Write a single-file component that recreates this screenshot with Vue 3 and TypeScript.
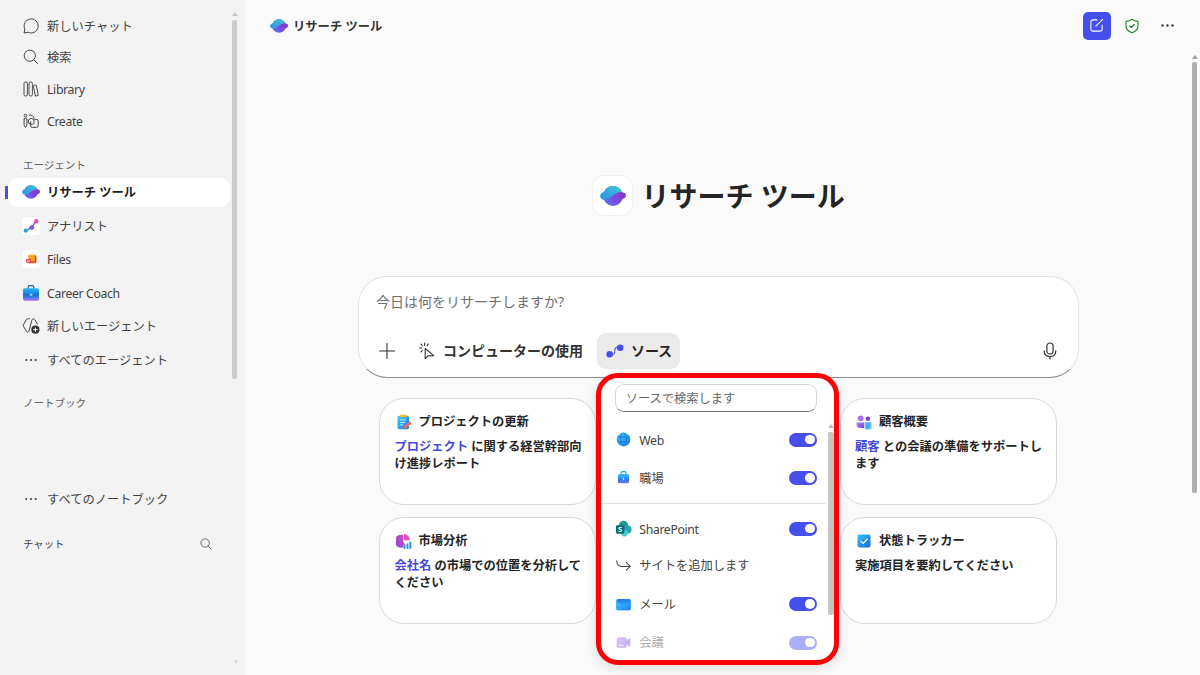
<script setup lang="ts">
interface NavItem { icon: string; label: string; latin?: boolean; active?: boolean }
interface Card { icon: string; title: string; accent?: string; body: string; side: 'left' | 'right' }
interface Source { icon: string; label: string; latin?: boolean; toggle: boolean; kind: string }

const nav: NavItem[] = [
  { icon: 'chat', label: '新しいチャット' },
  { icon: 'search', label: '検索' },
  { icon: 'library', label: 'Library', latin: true },
  { icon: 'create', label: 'Create', latin: true },
]
const agents: NavItem[] = [
  { icon: 'planet', label: 'リサーチ ツール', active: true },
  { icon: 'analyst', label: 'アナリスト' },
  { icon: 'files', label: 'Files', latin: true },
  { icon: 'career', label: 'Career Coach', latin: true },
  { icon: 'newagent', label: '新しいエージェント' },
  { icon: 'dots', label: 'すべてのエージェント' },
]
const cards: Card[] = [
  { icon: 'note', title: 'プロジェクトの更新', accent: 'プロジェクト', body: ' に関する経営幹部向け進捗レポート', side: 'left' },
  { icon: 'people', title: '顧客概要', accent: '顧客', body: ' との会議の準備をサポートします', side: 'right' },
  { icon: 'pie', title: '市場分析', accent: '会社名', body: ' の市場での位置を分析してください', side: 'left' },
  { icon: 'check', title: '状態トラッカー', body: '実施項目を要約してください', side: 'right' },
]
const sources: Source[] = [
  { icon: 'globe', label: 'Web', latin: true, toggle: true, kind: 'web' },
  { icon: 'case', label: '職場', toggle: true, kind: 'work' },
  { icon: 'sharepoint', label: 'SharePoint', latin: true, toggle: true, kind: 'sp' },
  { icon: 'sub', label: 'サイトを追加します', toggle: false, kind: 'site' },
  { icon: 'mail', label: 'メール', toggle: true, kind: 'mail' },
  { icon: 'video', label: '会議', toggle: true, kind: 'meeting' },
]
</script>

<template>
  <div class="app">
    <svg class="defs" width="0" height="0" aria-hidden="true">
      <defs>
        <linearGradient id="gTop" x1="0" y1="1" x2="1" y2="0"><stop offset="0" stop-color="#2f8fea" /><stop offset=".5" stop-color="#38a8e0" /><stop offset="1" stop-color="#38cfc8" /></linearGradient>
        <linearGradient id="gBot" x1="0" y1="1" x2="1" y2="0"><stop offset="0" stop-color="#5b7cf5" /><stop offset=".5" stop-color="#7a48e0" /><stop offset="1" stop-color="#9a35c4" /></linearGradient>
        <linearGradient id="gBlue" x1="0" y1="0" x2="1" y2="1"><stop offset="0" stop-color="#35c3f3" /><stop offset="1" stop-color="#1468dc" /></linearGradient>
        <linearGradient id="gMail" x1="0" y1="0" x2="1" y2="1"><stop offset="0" stop-color="#3cc8ff" /><stop offset="1" stop-color="#1e7cf0" /></linearGradient>
        <linearGradient id="gEnv" x1="0" y1="0" x2="0" y2="1"><stop offset="0" stop-color="#1e7de0" /><stop offset="1" stop-color="#38bdfc" /></linearGradient>
        <linearGradient id="gWork" x1="0" y1="0" x2="0" y2="1"><stop offset="0" stop-color="#35c0f8" /><stop offset=".6" stop-color="#2b7cf0" /><stop offset="1" stop-color="#7f74f2" /></linearGradient>
        <linearGradient id="gCase" x1="0" y1="0" x2="0" y2="1"><stop offset="0" stop-color="#28b4f5" /><stop offset=".6" stop-color="#1c74dc" /><stop offset=".8" stop-color="#5b7cf0" /><stop offset="1" stop-color="#b06cf0" /></linearGradient>
        <linearGradient id="gLine" x1="0" y1="1" x2="1" y2="0"><stop offset="0" stop-color="#22a7dc" /><stop offset=".5" stop-color="#7656dc" /><stop offset="1" stop-color="#ee55b0" /></linearGradient>
        <linearGradient id="gPink" x1="0" y1="1" x2="1" y2="0"><stop offset="0" stop-color="#8b45d8" /><stop offset="1" stop-color="#d44fc4" /></linearGradient>
        <linearGradient id="gPurple" x1="0" y1="0" x2="1" y2="1"><stop offset="0" stop-color="#b87cf5" /><stop offset="1" stop-color="#7548d8" /></linearGradient>
        <symbol id="chat" viewBox="0 0 16 16"><path d="M1 15l.9-3.900A7 7 0 1 1 5 14.200z" fill="none" stroke="currentColor" stroke-linejoin="round" /></symbol>
        <symbol id="search" viewBox="0 0 16 16"><circle cx="6.800" cy="6.700" r="5.600" fill="none" stroke="currentColor" /><path d="M10.900 10.800l3.700 3.800" fill="none" stroke="currentColor" stroke-linecap="round" /></symbol>
        <symbol id="library" viewBox="0 0 16 16"><g fill="none" stroke="currentColor" stroke-width=".95"><rect x="1" y="1" width="3.400" height="14" rx="1.500" /><rect x="6" y="1" width="3.400" height="14" rx="1.500" /><rect x="11.300" y="4" width="3" height="11" rx="1.400" transform="rotate(-11 12.700 9.500)" /></g></symbol>
        <symbol id="create" viewBox="0 0 16 16"><g fill="none" stroke="currentColor" stroke-linejoin="round"><circle cx="2.500" cy="2.600" r="1.300" /><path d="M1.100 5.600q1.400-1 2.800 0v6.700l-1.400 2.200-1.400-2.200z" /><path d="M5.800 2.100q4.400-.6 5.300 3.400" /><path d="M7.600 11.200a2.900 2.900 0 1 1 3.500-2.900v1.200q0 1.700-1.600 1.700z" /><path d="M11.300 6.400h2.200q1.700 0 1.700 1.700v4.600q0 1.700-1.700 1.700H9.300q-1.700 0-1.700-1.700V8.300" /></g></symbol>
        <symbol id="planet" viewBox="0 0 26 20"><circle cx="13" cy="10" r="9.900" fill="url(#gBot)" /><path d="M20 6.200C23.500 6 26 7 26 9.500 25.800 12 23.500 13.300 20 13.300z" fill="#8437cc" /><path d="M3.900 6A9.900 9.900 0 0 1 22 6C17.500 6 14 8.500 11 11 8 13.500 5 14 2.500 13.400-.8 12.500-.8 6.800 3.900 6z" fill="url(#gTop)" /></symbol>
        <symbol id="analyst" viewBox="0 0 18 18"><rect width="18" height="18" rx="4" fill="#fff" /><path d="M4 13.700l5.800-3.400L14.200 4" fill="none" stroke="url(#gLine)" stroke-width="1.500" /><circle cx="3.700" cy="13.700" r="2.100" fill="#20a9d9" /><circle cx="9.800" cy="10.500" r="2.300" fill="#7356da" /><circle cx="14.300" cy="4.200" r="2.300" fill="#e253b5" /></symbol>
        <symbol id="files" viewBox="0 0 18 18"><rect width="18" height="18" rx="4" fill="#fff" /><rect x="6.600" y="5" width="7.600" height="8.200" rx="1.300" fill="#f05a28" /><path d="M6.600 4.600h6v6.400H6.600z" fill="#ffb51f" /><path d="M7.500 6.500h4.300M7.500 8.300h4.300" stroke="#e88718" stroke-width=".7" /><path d="M4.500 9.400h3.800v3.600L4.500 12.100z" fill="#f9a598" stroke="#da3b38" stroke-width=".9" /><path d="M13 6.200v6.500l1.400-.5V7z" fill="#d53c49" /></symbol>
        <symbol id="career" viewBox="0 0 18 18"><path d="M6.200 5V2.800Q6.200 1.600 7.300 1.600h3.400q1.100 0 1.100 1.200V5" fill="none" stroke="#176490" stroke-width="1.100" /><rect x="1" y="4.200" width="16" height="12.500" rx="1.900" fill="url(#gCase)" /><path d="M1 9.500q8 3 16 0" fill="none" stroke="#185ca8" stroke-width=".6" /><rect x="7.800" y="9.800" width="2.400" height="2" rx=".4" fill="#83ddff" /></symbol>
        <symbol id="newagent" viewBox="0 0 18 17"><g fill="none" stroke="currentColor" stroke-linejoin="round"><path d="M7.800 1.300H5.500Q4.800 1.300 4.400 2L1 8l3.500 6q.4.700 1.100.7 1 0 1.300-1l3-11Q10.300 1.300 11.300 1.300q1 0 1.500.8l2.700 4.600" /></g><circle cx="13.400" cy="12.200" r="4.100" fill="#333" /><path d="M13.400 10.100v4.200M11.300 12.200h4.200" stroke="#fff" /></symbol>
        <symbol id="dots" viewBox="0 0 16 16"><g fill="currentColor"><circle cx="3.300" cy="8" r="1.100" /><circle cx="8" cy="8" r="1.100" /><circle cx="12.700" cy="8" r="1.100" /></g></symbol>
        <symbol id="compose" viewBox="0 0 16 16"><path d="M8.500 2H4.200Q2 2 2 4.200v7.600Q2 14 4.200 14h7.600q2.200 0 2.200-2.200V7.500M7.300 8.700L14.600 1.400" fill="none" stroke="#fff" stroke-width="1.100" stroke-linecap="round" /></symbol>
        <symbol id="shield" viewBox="0 0 14 16"><g fill="none" stroke="#21822d" stroke-width="1.150" stroke-linejoin="round" stroke-linecap="round"><path d="M7 1.300Q9.600 3.200 13 3.400V8q0 4.500-6 6.800Q1 12.500 1 8V3.400Q4.400 3.200 7 1.300z" /><path d="M4.700 8l1.600 1.500 3-3" /></g></symbol>
        <symbol id="plus" viewBox="0 0 16 16"><path d="M8 .5v15M.5 8h15" stroke="currentColor" stroke-width="1.100" stroke-linecap="round" /></symbol>
        <symbol id="cursor" viewBox="0 0 16 18"><g fill="none" stroke="currentColor" stroke-width="1.100" stroke-linecap="round" stroke-linejoin="round"><path d="M6.200 6.500v10.300l2.700-2.900 5.800-.3z" /><path d="M5.600 1v2.300M2.100 2.100l1.200 1.700M9.200 1.900L8.200 3.600M.8 5.700l1.900.4M2 9.800l1.300-1.200" /></g></symbol>
        <symbol id="nodes" viewBox="0 0 18 14"><path d="M4 10.500h2.700q1.800 0 2-2l.2-3q.2-2 2-2H14" fill="none" stroke="#464feb" stroke-width="1.100" /><circle cx="3.700" cy="10.300" r="3.300" fill="#464feb" /><circle cx="14.200" cy="3.700" r="3.300" fill="#464feb" /></symbol>
        <symbol id="mic" viewBox="0 0 14 18"><g fill="none" stroke="currentColor" stroke-width="1.200" stroke-linecap="round"><rect x="3.900" y="1" width="6.200" height="11" rx="3.100" /><path d="M1.200 8.800q0 5.700 5.800 5.700t5.800-5.700M7 14.500V17" /></g></symbol>
        <symbol id="note" viewBox="0 0 16 16"><rect x="1.500" y="1.700" width="11.500" height="13.500" rx="1.600" fill="url(#gMail)" /><path d="M4 .8h6.500v2.500H4z" fill="#f7b928" /><path d="M4 6h6M4 8.500h5M4 11h3" stroke="#b9f2ff" stroke-width="1.100" /><path d="M7.300 14.800l.8-3L13 7.800l2 2-4.900 4.300z" fill="#f26a4e" /><path d="M12.200 8.400L13.500 7.200l2 2-1.400 1.200z" fill="#e552a4" /></symbol>
        <symbol id="pie" viewBox="0 0 16 16"><path d="M7 2v6.500l3 4A6.500 6.500 0 1 1 7 2z" fill="url(#gPink)" /><path d="M7.800 1a6 6 0 0 1 6 6.300h-6z" fill="#e84eb1" /><path d="M7.400 12.300h2.300V16H7.400zM10.300 10.300h2.300V16h-2.300zM13.200 8.600h2.300V16h-2.300z" fill="#2398e4" stroke="#fff" stroke-width=".3" /></symbol>
        <symbol id="people" viewBox="0 0 16 16"><circle cx="4.700" cy="4.300" r="2.900" fill="#ae72ed" /><circle cx="11.900" cy="4.800" r="2.300" fill="#7046cf" /><path d="M.5 9.700Q.5 8.500 1.800 8.500h6.400v5.500H4.700Q.5 14 .5 9.700z" fill="url(#gPurple)" /><rect x="8.700" y="8" width="6.800" height="7.600" rx="1" fill="#6cc8f7" /><path d="M10 9.900h4.200M10 11.800h4.200M10 13.600h3" stroke="#2380dc" stroke-width=".8" /></symbol>
        <symbol id="check" viewBox="0 0 16 16"><rect x="1.500" y="1.500" width="13" height="13" rx="2.200" fill="url(#gBlue)" /><path d="M4.800 8.200l2.200 2.200 4.400-4.400" fill="none" stroke="#fff" stroke-width="1.100" stroke-linecap="round" /></symbol>
        <symbol id="globe" viewBox="0 0 16 16"><circle cx="8" cy="8" r="7.300" fill="url(#gMail)" /><g fill="none" stroke="#1470c4" stroke-width=".7"><ellipse cx="8" cy="8" rx="3.400" ry="7" /><path d="M1.200 5.400h13.600M1.200 10.600h13.600" /></g></symbol>
        <symbol id="case" viewBox="0 0 16 16"><path d="M5.500 5V2.700Q5.500 1.700 6.500 1.700h3q1 0 1 1V5" fill="none" stroke="#2aa0d4" stroke-width="1.200" /><rect x="2" y="4.200" width="12" height="10" rx="1.800" fill="url(#gWork)" /><path d="M8 8v3" stroke="#c2f2ff" stroke-width="1.300" /></symbol>
        <symbol id="sharepoint" viewBox="0 0 18 18"><circle cx="9" cy="5.800" r="5" fill="#1f9a98" /><circle cx="13.300" cy="10" r="4.200" fill="#24a4b0" /><circle cx="10" cy="13.800" r="3.600" fill="#48cdd0" /><rect x="1" y="5.500" width="9" height="9" rx="1.400" fill="#066f75" /><text x="5.500" y="12.900" text-anchor="middle" font-size="8" font-weight="700" font-family="Open Sans, sans-serif" fill="#fff">S</text></symbol>
        <symbol id="sub" viewBox="0 0 16 16"><path d="M.8 3q0 6 5.500 6H15M11 5l4.200 4L11 13" fill="none" stroke="currentColor" stroke-width="1.100" stroke-linecap="round" stroke-linejoin="round" /></symbol>
        <symbol id="mail" viewBox="0 0 16 16"><rect x=".3" y="2" width="15.400" height="12.200" rx="1.600" fill="url(#gEnv)" /><path d="M.3 5v7.600q0 1.600 1.600 1.600h12.200q1.600 0 1.600-1.600V5L8 9.200z" fill="url(#gMail)" /></symbol>
        <symbol id="video" viewBox="0 0 16 16"><path d="M10 6.500l4-2.800q1.300-.7 1.300.8v7q0 1.500-1.300.8L10 9.500z" fill="#8d4de0" /><rect x=".7" y="2.300" width="10.600" height="11.400" rx="2.200" fill="url(#gPurple)" /><path d="M3.300 11h5" stroke="#fff" /></symbol>
      </defs>
    </svg>

    <aside class="sidebar">
      <nav class="nav">
        <div v-for="n in nav" :key="n.label" class="nav-row">
          <span class="slot"><svg class="i16"><use :href="'#' + n.icon" /></svg></span>
          <span class="label" :class="{ latin: n.latin }">{{ n.label }}</span>
        </div>
      </nav>
      <div class="heading agents-head">エージェント</div>
      <div class="agents">
        <div v-for="a in agents" :key="a.label" class="agent-row" :class="{ active: a.active }">
          <span class="slot"><svg :class="a.icon === 'dots' ? 'i16' : 'i18'"><use :href="'#' + a.icon" /></svg></span>
          <span class="label" :class="{ latin: a.latin }">{{ a.label }}</span>
        </div>
      </div>
      <div class="heading note-head">ノートブック</div>
      <div class="agent-row all-notes">
        <span class="slot"><svg class="i16"><use href="#dots" /></svg></span><span class="label">すべてのノートブック</span>
      </div>
      <div class="chat-head"><span>チャット</span><svg><use href="#search" /></svg></div>
      <div class="scroll side-scroll"><i class="arrow"></i><i class="thumb"></i></div>
      <i class="side-end"></i>
    </aside>

    <main class="main">
      <header class="top">
        <svg class="top-logo"><use href="#planet" /></svg>
        <span class="top-title">リサーチ ツール</span>
        <div class="compose"><svg class="i16"><use href="#compose" /></svg></div>
        <svg class="shield"><use href="#shield" /></svg>
        <svg class="more"><use href="#dots" /></svg>
      </header>

      <section class="hero">
        <div class="hero-logo"><svg><use href="#planet" /></svg></div>
        <h1>リサーチ ツール</h1>
      </section>

      <section class="composer">
        <div class="prompt">今日は何をリサーチしますか?</div>
        <div class="tools">
          <svg class="plus"><use href="#plus" /></svg>
          <svg class="cursor"><use href="#cursor" /></svg>
          <span class="computer">コンピューターの使用</span>
          <div class="source"><svg><use href="#nodes" /></svg><span>ソース</span></div>
          <svg class="mic"><use href="#mic" /></svg>
        </div>
      </section>

      <section class="cards">
        <article v-for="c in cards" :key="c.title" class="card" :class="c.side">
          <div class="card-title"><svg class="i16"><use :href="'#' + c.icon" /></svg><span>{{ c.title }}</span></div>
          <p><span v-if="c.accent" class="accent">{{ c.accent }}</span>{{ c.body }}</p>
        </article>
      </section>

      <div class="popup">
        <div class="find">ソースで検索します</div>
        <div v-for="s in sources" :key="s.kind" class="src-row" :class="s.kind">
          <span class="src-icon"><svg><use :href="'#' + s.icon" /></svg></span>
          <span class="src-label" :class="{ latin: s.latin }">{{ s.label }}</span>
          <span v-if="s.toggle" class="toggle"><i></i></span>
        </div>
        <div class="scroll pop-scroll"><i class="arrow"></i><i class="thumb"></i></div>
      </div>
      <div class="scroll main-scroll"><i class="arrow"></i><i class="thumb"></i></div>
    </main>
  </div>
</template>

<style>
body { margin: 0; overflow: hidden; }
</style>

<style scoped>
* { box-sizing: border-box; }
.app { position: relative; display: flex; width: 1200px; height: 675px; overflow: hidden; background: #fafafa; color: #424242; font: 12.250px/18px "Noto Sans", "Noto Sans CJK JP", sans-serif; white-space: nowrap; }
.defs { position: absolute; }
svg { display: block; flex: none; }
.i16 { width: 16px; height: 16px; }
.i18 { width: 18px; height: 18px; }
.label { padding-top: 2px; }
.latin { letter-spacing: -.35px; }

.sidebar { position: relative; width: 246px; flex: none; background: #f3f3f3; padding-top: 9.700px; }
.nav-row { display: flex; align-items: center; height: 31.800px; padding-left: 22px; }
.slot { width: 18px; margin-right: 7px; display: flex; justify-content: center; }
.heading { font-size: 10.500px; color: #616161; padding-left: 23px; height: 18px; }
.agents-head { margin-top: 18.700px; }
.agents { margin-top: 4px; }
.agent-row { display: flex; align-items: center; height: 33.400px; padding-left: 22px; }
.agent-row.active { position: relative; height: 29.500px; margin: 1.500px 16.500px 2.200px 8px; padding-left: 14px; border-radius: 9px; background: #fff; color: #1b1b1b; font-weight: 700; }
.agent-row.active::before { content: ""; position: absolute; left: -3px; top: 8px; width: 2.500px; height: 13px; background: #464feb; }
.agent-row.active svg { height: 14px; }
.note-head { margin-top: 17.500px; }
.all-notes { margin-top: 70.700px; }
.chat-head { display: flex; justify-content: space-between; align-items: center; height: 18px; margin-top: 19.500px; padding: 0 34px 0 23px; font-size: 10.400px; }
.chat-head svg { width: 12px; height: 12px; }

.scroll { position: absolute; width: 5.400px; }
.scroll i { display: block; }
.arrow { width: 0; height: 0; border: 3px solid transparent; border-top: 0; border-bottom: 4.500px solid #c6c6c6; }
.thumb { margin-top: 3.500px; border-radius: 2px; background: #cdcdcd; }
.side-scroll { left: 231.600px; top: 12px; }
.side-scroll .thumb { height: 359px; }
.side-end { position: absolute; left: 235px; top: 660px; width: 2px; height: 3px; background: #d5d5d5; }
.main-scroll { right: 2.700px; top: 54.500px; }
.main-scroll .arrow { border-bottom-color: #9d9d9d; }
.main-scroll .thumb { height: 431px; background: #aeaeae; }

.main { position: relative; flex: 1; padding: 11.500px 0 0 0; }
.top { display: flex; align-items: center; height: 28px; padding: 0 24.500px 0 24px; }
.top-logo { width: 18px; height: 14px; }
.top-title { margin-left: 5px; font-weight: 700; font-size: 12.300px; color: #333; padding-top: 2px; }
.compose { margin-left: auto; width: 28px; height: 28px; border-radius: 5px; background: #464feb; display: flex; align-items: center; justify-content: center; }
.compose svg { width: 15px; height: 15px; }
.shield { width: 14px; height: 16px; margin-left: 14px; }
.more { width: 17px; height: 17px; margin-left: 20px; color: #333; }

.hero { display: flex; align-items: center; height: 42px; margin: 135px 0 0 346px; }
.hero-logo { width: 41px; height: 41px; border-radius: 12px; background: #fff; border: 1px solid #f1efef; display: flex; align-items: center; justify-content: center; }
.hero-logo svg { width: 26px; height: 20px; }
h1 { margin: 0 0 0 8.500px; font-size: 28px; line-height: 42px; color: #242424; font-weight: 700; }

.composer { width: 720.500px; height: 101.500px; margin: 59.500px 0 0 112px; border: 1px solid #e3e3e3; border-bottom-color: #8e8e8e; border-radius: 29px; background: #fff; padding: 14.500px 27px 0 17px; }
.prompt { height: 20px; line-height: 20px; font-size: 14px; color: #707070; }
.tools { display: flex; align-items: center; margin-top: 21px; height: 37px; color: #333; font-size: 14px; font-weight: 700; }
.plus { width: 16px; height: 16px; margin-left: 2.500px; }
.cursor { width: 16px; height: 18px; margin-left: 24px; }
.computer { margin-left: 8.500px; }
.source { display: flex; align-items: center; gap: 7px; width: 83px; height: 36.500px; margin-left: 14px; padding-left: 9px; border-radius: 9px; background: #ebebeb; color: #242424; }
.source svg { width: 18px; height: 14px; }
.source span { letter-spacing: -.1px; }
.mic { width: 14px; height: 18px; margin-left: auto; margin-right: -6px; }

.cards { display: grid; grid-template-columns: repeat(3, 217px); grid-template-rows: repeat(2, 107px); gap: 12px 13.300px; margin: 20.500px 0 0 133px; }
.card { border: 1px solid #d9d9d9; border-radius: 25px; background: #fff; padding: 14px 7px 0 14.500px; color: #242424; font-weight: 700; white-space: normal; }
.card.left { grid-column: 1; }
.card.right { grid-column: 3; }
.card-title { display: flex; align-items: center; height: 18px; padding-left: 1px; }
.card-title span { margin-left: 7px; }
.card p { margin: 6.500px 0 0; line-height: 17.800px; }
.accent { color: #4648d8; }

.popup { position: absolute; left: 349.700px; top: 372.700px; width: 243px; height: 292px; border: 5.500px solid #fb0207; border-radius: 22px; background: #fff; box-shadow: 0 3px 12px rgba(0, 0, 0, .12); overflow: hidden; }
.find { width: 202px; height: 28px; margin: 6px 0 0 14px; padding: 0 10px; line-height: 27px; border: 1px solid #d6d6d6; border-bottom-color: #777; border-radius: 9px; color: #666; }
.src-row { display: flex; align-items: center; height: 38px; padding: 0 17px 0 14px; }
.src-row.web { margin-top: 9px; }
.src-row.work { height: 45px; padding-bottom: 5.500px; border-bottom: 1px solid #e2e2e2; margin-right: 8px; padding-right: 9px; }
.src-row.sp { margin-top: 6px; }
.src-row.site { height: 35px; }
.src-row.mail { margin-top: 1px; height: 41px; }
.src-row.meeting { height: 36px; opacity: .45; }
.src-icon { width: 17px; display: flex; justify-content: center; }
.src-icon svg { width: 15px; height: 15px; }
.sp .src-icon svg { width: 17px; height: 17px; }
.src-label { margin-left: 7.600px; padding-top: 1px; }
.web .src-label, .sp .src-label, .work .src-label { padding-top: 2.500px; }
.toggle { margin-left: auto; width: 28px; height: 14px; border-radius: 7px; background: #464feb; padding: 2.200px; }
.toggle i { display: block; width: 9.600px; height: 9.600px; margin-left: auto; border-radius: 50%; background: #fff; }
.pop-scroll { right: 0; top: 46.500px; }
.pop-scroll .arrow { border-bottom-color: #bbb; }
.pop-scroll .thumb { height: 183px; background: #c6c6c6; }
</style>
